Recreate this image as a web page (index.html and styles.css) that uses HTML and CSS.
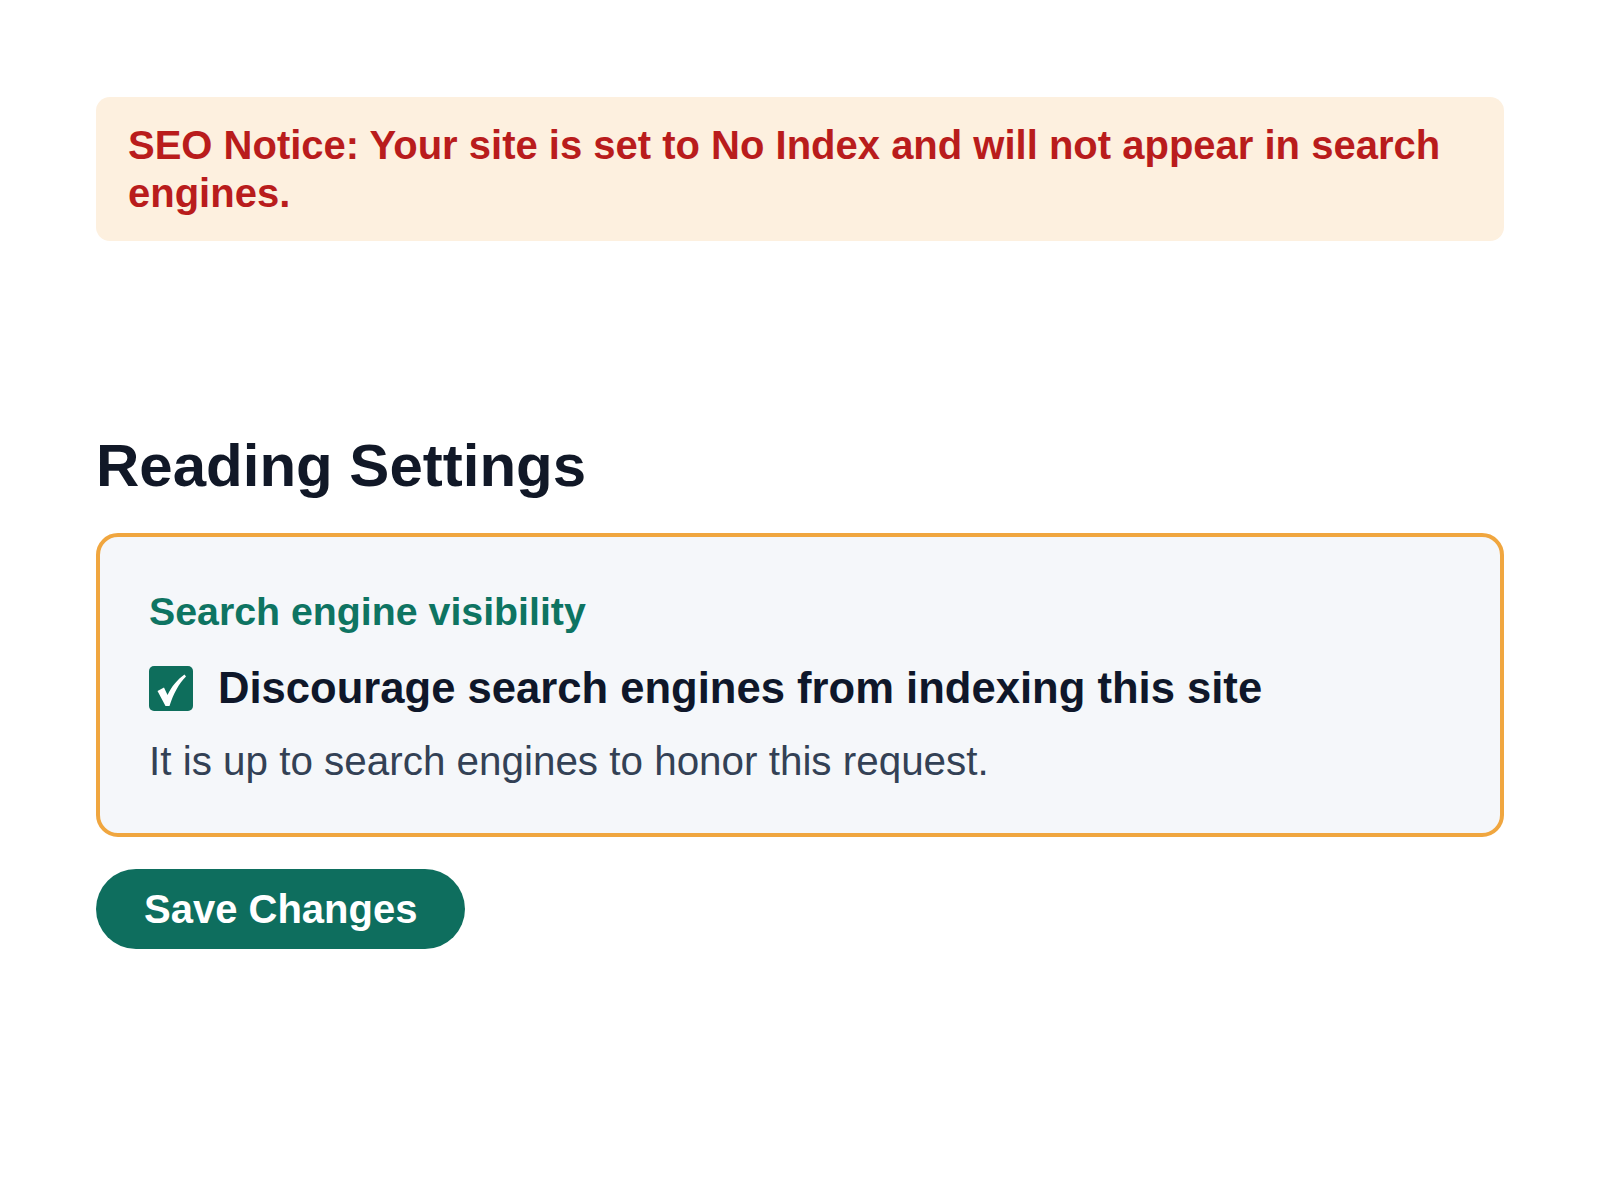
FILE: index.html
```html
<!DOCTYPE html>
<html lang="en">
<head>
<meta charset="utf-8">
<title>Reading Settings</title>
<link rel="stylesheet" href="styles.css">
</head>
<body>
<main class="page">
  <div class="notice">SEO Notice: Your site is set to No Index and will not appear in search engines.</div>
  <h1 class="title">Reading Settings</h1>
  <section class="card">
    <div class="label">Search engine visibility</div>
    <label class="option">
      <span class="checkbox">
        <svg viewBox="0 0 44 44" width="44" height="44" aria-hidden="true">
          <path d="M8.5 24 L15 20.5 L18.5 28 C22.5 19.5 28.5 12.5 35.5 7.5 L37 9.5 C30 16.5 24.5 26.5 20.5 39 L16.5 39 Z" fill="#ffffff"/>
        </svg>
      </span>
      <span class="option-text">Discourage search engines from indexing this site</span>
    </label>
    <p class="desc">It is up to search engines to honor this request.</p>
  </section>
  <button class="save" type="button">Save Changes</button>
</main>
</body>
</html>
```

FILE: styles.css
```css
html, body {
  margin: 0;
  padding: 0;
  background: #ffffff;
}

body {
  font-family: "Liberation Sans", Arial, Helvetica, sans-serif;
}

.page {
  display: flex;
  flex-direction: column;
  align-items: flex-start;
  padding: 97px 96px 0 96px;
}

.notice {
  box-sizing: border-box;
  width: 100%;
  background: #fdf0df;
  color: #b91c1c;
  font-size: 40px;
  font-weight: 700;
  line-height: 48px;
  padding: 24px 32px;
  border-radius: 14px;
}

.title {
  margin: 189px 0 31px 0;
  font-size: 60px;
  line-height: 72px;
  font-weight: 700;
  color: #111827;
}

.card {
  box-sizing: border-box;
  width: 100%;
  background: #f5f7fa;
  border: 4px solid #f0a63f;
  border-radius: 22px;
  padding: 51px 49px 48px 49px;
  display: flex;
  flex-direction: column;
}

.label {
  font-size: 39.3px;
  line-height: 47px;
  font-weight: 700;
  color: #0e7462;
}

.option {
  display: flex;
  align-items: center;
  gap: 25px;
  margin-top: 27px;
}

.checkbox {
  width: 44px;
  height: 45px;
  border-radius: 5px;
  background: #0e6e5c;
  display: flex;
  align-items: center;
  justify-content: center;
  flex: none;
}

.checkbox svg {
  display: block;
}

.option-text {
  font-size: 43.6px;
  line-height: 53px;
  font-weight: 700;
  color: #0f172a;
}

.desc {
  margin: 22px 0 0 0;
  font-size: 40.4px;
  line-height: 48px;
  color: #334155;
}

.save {
  margin-top: 32px;
  font-family: "Liberation Sans", Arial, Helvetica, sans-serif;
  font-size: 40px;
  line-height: 48px;
  font-weight: 700;
  color: #ffffff;
  background: #0e6e5e;
  border: none;
  border-radius: 40px;
  padding: 16px 48px;
  cursor: pointer;
}
```
